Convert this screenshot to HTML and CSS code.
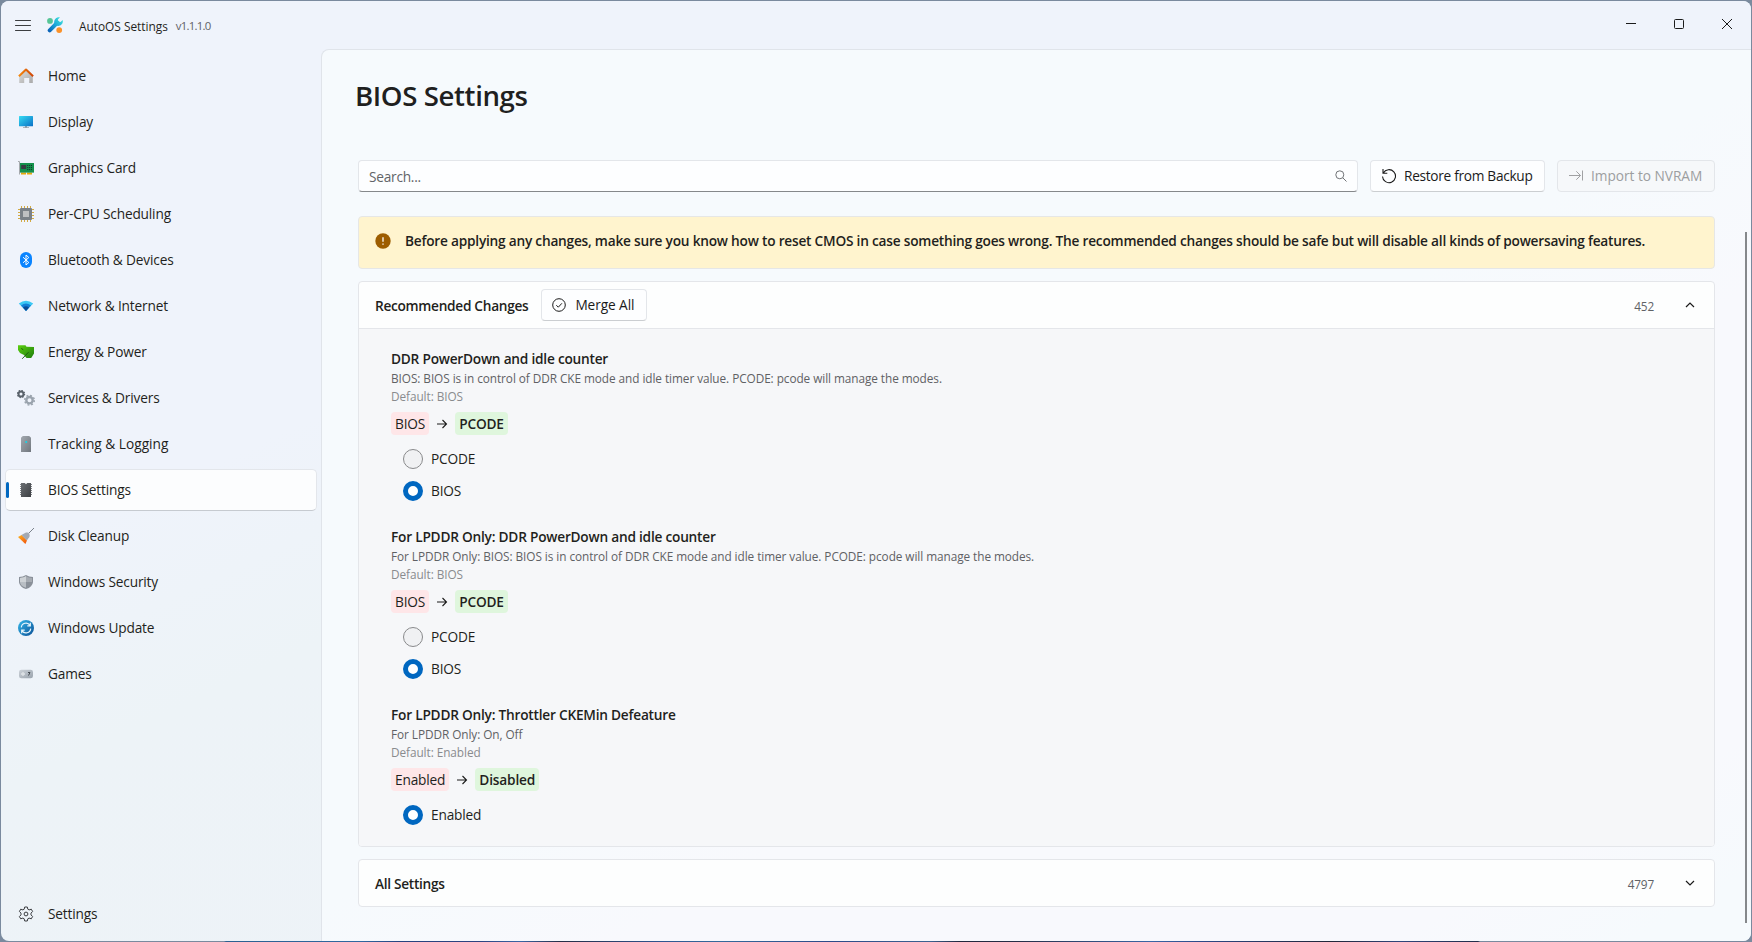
FILE: index.html
```html
<!DOCTYPE html>
<html lang="en">
<head>
<meta charset="utf-8">
<title>AutoOS Settings</title>
<link rel="stylesheet" href="styles.css">
</head>
<body>
<svg class="defs" width="0" height="0" aria-hidden="true">
  <defs>
    <linearGradient id="g-wrench" gradientUnits="userSpaceOnUse" x1="2" y1="14" x2="14" y2="2"><stop offset="0" stop-color="#0a63b8"/><stop offset=".5" stop-color="#1aa3d8"/><stop offset="1" stop-color="#3fdcdc"/></linearGradient>
    <linearGradient id="g-wall" x1="0" y1="0" x2="1" y2="1"><stop offset="0" stop-color="#dedede"/><stop offset="1" stop-color="#a9a9a9"/></linearGradient>
    <linearGradient id="g-roof" x1="0" y1="0" x2="1" y2="0"><stop offset="0" stop-color="#f58a10"/><stop offset="1" stop-color="#cf4508"/></linearGradient>
    <linearGradient id="g-screen" x1="0" y1="0" x2="1" y2="1"><stop offset="0" stop-color="#36dcf3"/><stop offset="1" stop-color="#0a6fc6"/></linearGradient>
    <linearGradient id="g-leaf" x1="0" y1="0" x2="1" y2="1"><stop offset="0" stop-color="#5bd00f"/><stop offset="1" stop-color="#1e7d0d"/></linearGradient>
    <linearGradient id="g-tower" x1="0" y1="0" x2="1" y2="1"><stop offset="0" stop-color="#a3a9b0"/><stop offset="1" stop-color="#70767d"/></linearGradient>
    <linearGradient id="g-bios" x1="0" y1="0" x2="1" y2="1"><stop offset="0" stop-color="#6a6e72"/><stop offset="1" stop-color="#3d4044"/></linearGradient>
    <linearGradient id="g-brush" x1="0" y1="0" x2="1" y2="1"><stop offset="0" stop-color="#fdb520"/><stop offset="1" stop-color="#f0500c"/></linearGradient>
    <linearGradient id="g-update" x1="0" y1="0" x2="1" y2="1"><stop offset="0" stop-color="#35b8ea"/><stop offset="1" stop-color="#0b4f96"/></linearGradient>
    <linearGradient id="g-pad" x1="0" y1="0" x2="1" y2="1"><stop offset="0" stop-color="#ccd2d9"/><stop offset="1" stop-color="#9aa3ad"/></linearGradient>
  </defs>
</svg>
<div class="window">
  <header class="titlebar">
    <svg class="menu" viewBox="0 0 16 12"><path d="M.5 1.5h15M.5 6.500h15M.5 11.500h15" fill="none" stroke="#3b3d40" stroke-linecap="round"/></svg>
    <svg class="logo" viewBox="0 0 16 16">
      <circle cx="3" cy="3.900" r="2.900" fill="#56c596"/>
      <path d="M2.700 13.300 10.500 5.500" stroke="url(#g-wrench)" stroke-width="4" stroke-linecap="round"/>
      <path d="M7.400 6.500C6.500 3 9 -.4 13 .3L10.900 2.600 11.300 4.700 13.500 5.100 15.700 3C16.600 7 13 9.800 9.500 8.600z" fill="url(#g-wrench)"/>
      <circle cx="12.200" cy="13.100" r="2.900" fill="#fb9128"/>
    </svg>
    <span class="app-name">AutoOS Settings</span>
    <span class="version">v1.1.1.0</span>
    <div class="caption">
      <svg viewBox="0 0 12 12"><path d="M1 5.500h10" stroke="#1b1b1b"/></svg>
      <svg viewBox="0 0 12 12"><rect x="1.500" y="1.500" width="9" height="9" rx="1" fill="none" stroke="#1b1b1b"/></svg>
      <svg viewBox="0 0 12 12"><path d="M1 1l10 10M11 1L1 11" stroke="#1b1b1b"/></svg>
    </div>
  </header>
  <nav class="nav">
    <a class="item"><svg viewBox="0 0 16 16"><path d="M1.200 8.200 8 2l6.800 6.200V15h-3.600v-5H6.200v5h-5z" fill="url(#g-wall)"/><path d="M.9 8.200 8 1.600l7.100 6.600" fill="none" stroke="url(#g-roof)" stroke-width="2.100" stroke-linejoin="round"/></svg>Home</a>
    <a class="item"><svg viewBox="0 0 16 16"><path d="M7 12h2v1.200h2v.9H5v-.9h2z" fill="#9aa0a8"/><rect x="1" y="2" width="14" height="10.300" rx=".6" fill="url(#g-screen)"/></svg>Display</a>
    <a class="item"><svg viewBox="0 0 16 16"><path d="M0 1.500h1.500v13" fill="none" stroke="#a5a9ad"/><path d="M3 12.400h5v2H3zM9 12.400h5v2H9z" fill="#e5a80a"/><rect x="2" y="3" width="14" height="9.600" fill="#14904c"/><path d="M3.200 5h5v4h-5z" fill="#383b42"/><path d="M9.200 5.500H14M9.200 7.600H14M9.200 9.600H14" stroke="#12352a" stroke-dasharray="1.100 .8"/></svg>Graphics Card</a>
    <a class="item"><svg viewBox="0 0 16 16"><path d="M3.500 0v16M6.500 0v16M9.500 0v16M12.500 0v16M0 3.500h16M0 6.500h16M0 9.500h16M0 12.500h16" stroke="#cfa22c" stroke-width=".9"/><rect x="2" y="2" width="12" height="12" rx="1" fill="#7b8188"/><rect x="5" y="5" width="6" height="6" fill="#bfc0c2"/></svg>Per-CPU Scheduling</a>
    <a class="item"><svg viewBox="0 0 16 16"><rect x="2" y="0" width="12" height="16" rx="6" fill="#0a84ff"/><path d="M5 5.200l5.800 5.300L8 13V3l2.800 2.500L5 10.800" fill="none" stroke="#fff"/></svg>Bluetooth &amp; Devices</a>
    <a class="item"><svg viewBox="0 0 16 16"><path d="M.8 5.400Q8 .2 15.200 5.400L8 13z" fill="#3bc8f4"/><path d="M3 7.500Q8 3.600 13 7.500L8 13z" fill="#1480d6"/><path d="M5 9.600Q8 7 11 9.600L8 13z" fill="#0b4c96"/></svg>Network &amp; Internet</a>
    <a class="item"><svg viewBox="0 0 16 16"><path d="M0 1.200h7.500l1 1.600L16 3v6.600L13.200 14H8.500L6 11 2 9 0 6z" fill="url(#g-leaf)"/><path d="M4.200 14.800 10.500 8.200M3.300 4.400l2 1.400" stroke="#18550f" stroke-width=".9"/></svg>Energy &amp; Power</a>
    <a class="item"><svg class="gears" viewBox="0 0 18 16"><circle cx="4" cy="4" r="2.500" fill="none" stroke="#5a626b" stroke-width="2"/><circle cx="4" cy="4" r="3.600" fill="none" stroke="#5a626b" stroke-width="1.200" stroke-dasharray="1.400 1.427"/><circle cx="12.500" cy="10.200" r="3.200" fill="none" stroke="#9aa3ad" stroke-width="2.400"/><circle cx="12.500" cy="10.200" r="4.800" fill="none" stroke="#9aa3ad" stroke-width="1.500" stroke-dasharray="1.900 1.870"/></svg>Services &amp; Drivers</a>
    <a class="item wide"><svg viewBox="0 0 16 16"><path d="M3 1.800 4.800 0h6.400L13 1.800V16H3z" fill="url(#g-tower)"/><circle cx="8.200" cy="6" r="1.100" fill="#19d3e6"/></svg>Tracking &amp; Logging</a>
    <a class="item selected"><svg viewBox="0 0 16 16"><path d="M2.500 2v12M13.500 2v12" stroke="#83878b" stroke-dasharray="1 1"/><path d="M3 1h3.800l1.200 1.200L9.200 1H13v14H3z" fill="url(#g-bios)"/></svg>BIOS Settings</a>
    <a class="item"><svg viewBox="0 0 16 16"><path d="M10.500 5.500 16 0" stroke="#7b828b"/><path d="M0 9l3.600-2L9 12.400 7.400 16z" fill="url(#g-brush)"/><path d="M3.400 6.900 8 4.600q2.600-.6 3.300 1.100t.1 3.400L8.800 12.400z" fill="#a3a9b2"/></svg>Disk Cleanup</a>
    <a class="item"><svg viewBox="0 0 16 16"><path d="M8 1q3 2 7 2v5.200Q14.500 13 8 15 1.500 13 1 8.200V3q4 0 7-2z" fill="#8a9099"/><path d="M8 2.200v11.600Q2.300 12 2 8V4q3.500 0 6-1.800z" fill="#b9bec4"/><path d="M8 2.200Q10.500 4 14 4v4H8z" fill="#a6abb2"/><path d="M2 4q3.500 0 6-1.800V8H2z" fill="#ced2d6"/></svg>Windows Security</a>
    <a class="item"><svg viewBox="0 0 16 16"><circle cx="8" cy="8" r="8" fill="url(#g-update)"/><path d="M3.300 7.400A4.700 4.700 0 0 1 12 5.400M12.300 2.800v3h-3M12.700 8.600A4.700 4.700 0 0 1 4 10.600M3.700 13.200v-3h3" fill="none" stroke="#e8f5fc" stroke-width="1.200"/></svg>Windows Update</a>
    <a class="item"><svg viewBox="0 0 16 16"><rect x="1" y="3.700" width="14" height="8.600" rx="2.400" fill="url(#g-pad)"/><path d="M3 8h4M5 6v4" stroke="#dfe3e7" stroke-width="1.300"/><path d="M10 6.500h2L10.500 9.500" fill="none" stroke="#454b52"/></svg>Games</a>
    <a class="item footer"><svg viewBox="0 0 16 16"><path d="M6.700 1h2.600l.5 2.200 1.300.7 2.200-.7 1.300 2.300-1.600 1.600v1.800l1.600 1.600-1.300 2.300-2.200-.7-1.300.7-.5 2.200H6.700l-.5-2.200-1.300-.7-2.200.7-1.300-2.300L3 8.900V7.100L1.400 5.500l1.300-2.300 2.200.7 1.300-.7z" fill="none" stroke="#3b3d40" stroke-linejoin="round"/><circle cx="8" cy="8" r="1.900" fill="none" stroke="#3b3d40"/></svg>Settings</a>
  </nav>
  <main class="page">
    <h1>BIOS Settings</h1>
    <div class="toolbar">
      <div class="search"><span>Search...</span><svg viewBox="0 0 12 12"><circle cx="4.800" cy="4.800" r="4" fill="none" stroke="#707376"/><path d="M7.800 7.800 11.500 11.500" stroke="#707376"/></svg></div>
      <button class="btn restore"><svg viewBox="0 0 16 16"><path d="M2.300 5A6.500 6.500 0 1 1 1.500 8.500M2 1v4.300h4.300" fill="none" stroke="#1b1b1b" stroke-width="1.100"/></svg>Restore from Backup</button>
      <button class="btn import" disabled><svg viewBox="0 0 16 16"><path d="M1 7.500h11.500M8.300 3.300l4.200 4.200-4.200 4.200M14.500 2.500v10" fill="none" stroke="#a0a1a3"/></svg>Import to NVRAM</button>
    </div>
    <div class="infobar">
      <svg viewBox="0 0 16 16"><circle cx="8" cy="8" r="7.700" fill="#9d5d00"/><path d="M8 4.200v4.600M8 10.400v1.400" stroke="#fff" stroke-width="1.300"/></svg>
      <span>Before applying any changes, make sure you know how to reset CMOS in case something goes wrong. The recommended changes should be safe but will disable all kinds of powersaving features.</span>
    </div>
    <section class="expander">
      <div class="head">
        <h2>Recommended Changes</h2>
        <button class="btn merge"><svg viewBox="0 0 16 16"><circle cx="8" cy="8" r="6.300" fill="none" stroke="#1b1b1b"/><path d="M5.300 8.200l2 2 3.600-3.900" fill="none" stroke="#1b1b1b"/></svg>Merge All</button>
        <span class="count">452</span>
        <svg class="chev" viewBox="0 0 10 6"><path d="M1 5l4-4 4 4" fill="none" stroke="#1b1b1b" stroke-width="1.200"/></svg>
      </div>
      <div class="body">
        <article>
          <h3>DDR PowerDown and idle counter</h3>
          <p class="desc">BIOS: BIOS is in control of DDR CKE mode and idle timer value. PCODE: pcode will manage the modes.</p>
          <p class="default">Default: BIOS</p>
          <div class="change"><span class="old">BIOS</span><svg viewBox="0 0 12 12"><path d="M1 6h9.500M6.500 2l4 4-4 4" fill="none" stroke="#1b1b1b" stroke-width="1.100"/></svg><b class="new">PCODE</b></div>
          <label><i></i>PCODE</label>
          <label><i class="on"></i>BIOS</label>
        </article>
        <article>
          <h3>For LPDDR Only: DDR PowerDown and idle counter</h3>
          <p class="desc">For LPDDR Only: BIOS: BIOS is in control of DDR CKE mode and idle timer value. PCODE: pcode will manage the modes.</p>
          <p class="default">Default: BIOS</p>
          <div class="change"><span class="old">BIOS</span><svg viewBox="0 0 12 12"><path d="M1 6h9.500M6.500 2l4 4-4 4" fill="none" stroke="#1b1b1b" stroke-width="1.100"/></svg><b class="new">PCODE</b></div>
          <label><i></i>PCODE</label>
          <label><i class="on"></i>BIOS</label>
        </article>
        <article>
          <h3>For LPDDR Only: Throttler CKEMin Defeature</h3>
          <p class="desc">For LPDDR Only: On, Off</p>
          <p class="default">Default: Enabled</p>
          <div class="change"><span class="old">Enabled</span><svg viewBox="0 0 12 12"><path d="M1 6h9.500M6.500 2l4 4-4 4" fill="none" stroke="#1b1b1b" stroke-width="1.100"/></svg><b class="new">Disabled</b></div>
          <label><i class="on"></i>Enabled</label>
        </article>
      </div>
    </section>
    <section class="expander">
      <div class="head">
        <h2>All Settings</h2>
        <span class="count">4797</span>
        <svg class="chev" viewBox="0 0 10 6"><path d="M1 1l4 4 4-4" fill="none" stroke="#1b1b1b" stroke-width="1.200"/></svg>
      </div>
    </section>
    <div class="scrollbar"></div>
  </main>
</div>
</body>
</html>
```
FILE: styles.css
```css
* { box-sizing: border-box; }

body {
  margin: 0;
  height: 942px;
  padding: 1px;
  overflow: hidden;
  font: 13.7px/20px "Open Sans", "Noto Sans", sans-serif;
  letter-spacing: -0.17px;
  color: #1f1f20;
  background: linear-gradient(90deg, #7a8a9e 0 224px, #2b6090 226px, #3068a0 360px, #27437f 400px, #2d4380 480px, #3a66a5 520px, #262d45 560px, #2f5590 660px, #356a9b 720px, #2d4a88 830px, #3c6290 930px, #22263c 960px, #272f48 1020px, #3a66a5 1150px, #2d4a88 1200px, #222638 1330px, #30467c 1400px, #222c48 1478px, #7a8a9e 1480px) bottom / 100% 1px no-repeat, #7a8a9e;
}

h1, h2, h3, p { margin: 0; }
svg { display: block; flex: none; }
.defs { position: absolute; }

.window {
  display: grid;
  grid-template: 48px 1fr / 320px 1fr;
  width: 1750px;
  height: 940px;
  border-radius: 8px;
  overflow: hidden;
  background: linear-gradient(155deg, #eff3fb 0 32%, #edf3f7 45%, #eef2f8 100%);
}

.titlebar {
  grid-column: 1 / 3;
  display: flex;
  align-items: center;
  padding-left: 14px;
  background: #eff3fb;
}
.menu { width: 16px; height: 12px; }
.logo { width: 16px; height: 16px; margin: 0 16px; }
.app-name { margin-top: 2px; font-size: 11.9px; letter-spacing: -0.02px; }
.version { margin: 2px 0 0 8px; font-size: 11.4px; letter-spacing: -0.75px; color: #606266; }
.caption { display: flex; gap: 36px; margin: -2px 18px 0 auto; }
.caption svg { width: 12px; height: 12px; }

.nav {
  display: flex;
  flex-direction: column;
  gap: 4px;
  padding: 6px 4px 6px 4px;
}
.item {
  display: flex;
  align-items: center;
  height: 42px;
  padding-left: 12px;
  border: 1px solid transparent;
  border-radius: 5px;
}
.item svg { width: 16px; height: 16px; margin-right: 14px; }
.item .gears { width: 18px; margin: 0 13px 0 -1px; }
.wide { letter-spacing: 0; }
.selected {
  position: relative;
  border-color: #e3e6eb;
  border-bottom-color: #c6cad0;
  background: #fcfdfe;
}
.selected::before {
  content: "";
  position: absolute;
  left: 0;
  top: 12px;
  width: 3px;
  height: 16px;
  border-radius: 2px;
  background: #0067c0;
}
.footer { margin-top: auto; }

.page {
  position: relative;
  padding: 26px 36px 0 36px;
  border: solid #e0e4ea;
  border-width: 1px 0 0 1px;
  border-top-left-radius: 8px;
  background: linear-gradient(150deg, #f6fafd 0 50%, #f8f9fd 62% 88%, #f6fafd 96%);
}
h1 {
  margin-left: -3px;
  font-size: 27.6px;
  line-height: 38px;
  font-weight: 600;
  letter-spacing: -0.38px;
}

.toolbar { display: flex; margin-top: 46px; }
.search {
  display: flex;
  flex: 1;
  align-items: center;
  justify-content: space-between;
  height: 32px;
  padding: 0 10px;
  border: 1px solid #e3e6ea;
  border-bottom-color: #85888b;
  border-radius: 4px;
  background: #fdfeff;
  color: #626467;
}
.search span { margin-top: 1px; letter-spacing: -0.25px; }
.search svg { width: 12px; height: 12px; }
.btn {
  display: flex;
  align-items: center;
  height: 32px;
  padding: 0 0 0 10px;
  border: 1px solid #e3e6ea;
  border-bottom-color: #cbced1;
  border-radius: 4px;
  background: #fdfeff;
  font: inherit;
  letter-spacing: -0.3px;
  color: #1b1b1b;
  white-space: nowrap;
}
.btn svg { width: 16px; height: 16px; margin-right: 7px; }
.restore { width: 175px; margin-left: 12px; }
.import {
  width: 158px;
  margin-left: 12px;
  border-color: #e3e6ea;
  background: #f6f8fa;
  color: #9c9ea0;
  letter-spacing: -0.03px;
}

.infobar {
  display: flex;
  align-items: center;
  height: 53px;
  margin-top: 24px;
  padding: 0 15px 3px 16px;
  border: 1px solid #e6e7e6;
  border-radius: 4px;
  background: #fff4ce;
  font-weight: 600;
  letter-spacing: -0.225px;
  white-space: nowrap;
}
.infobar svg { width: 16px; height: 16px; margin-right: 14px; }

.expander {
  margin-top: 12px;
  border: 1px solid #e4e6ea;
  border-radius: 4px;
  overflow: hidden;
  background: #fdfefe;
}
.head { display: flex; align-items: center; height: 46px; padding: 0 19px 0 16px; }
h2 { padding-top: 2px; font-size: inherit; line-height: 20px; font-weight: 600; letter-spacing: -0.3px; }
.merge { width: 106px; margin-left: 13px; padding-left: 9px; letter-spacing: -0.1px; }
.merge svg { margin-right: 8px; }
.count { margin-left: auto; padding-top: 2px; font-size: 11.8px; color: #606266; }
.chev { width: 10px; height: 6px; margin-left: 31px; }
.body {
  padding: 20px 32px 15px;
  border-top: 1px solid #e4e6ea;
  background: #f6f7f9;
}

article + article { margin-top: 20px; }
h3 { font-size: inherit; line-height: 20px; font-weight: 600; letter-spacing: -0.23px; }
.desc, .default { margin-top: 1px; font-size: 11.8px; line-height: 16px; letter-spacing: -0.065px; color: #5f6164; }
.default { margin-top: 2px; color: #898b8e; }
.change { display: flex; align-items: center; height: 23px; margin: 8px 0 8px; line-height: 23px; }
.change svg { width: 12px; height: 12px; margin: 0 7px; }
.old, .new { padding: 0 4px; border-radius: 4px; }
.old { background: #fee6e8; }
.new { background: #dff6dd; font-weight: 600; }

label { display: flex; align-items: center; height: 32px; padding-left: 12px; }
label i {
  width: 20px;
  height: 20px;
  margin-right: 8px;
  border: 1px solid #898a8c;
  border-radius: 50%;
  background: #f0f1f3;
}
label .on { border: 5px solid #0067c0; background: #fff; }

.scrollbar {
  position: absolute;
  right: 4px;
  top: 182px;
  width: 2px;
  height: 691px;
  background: #85888b;
}
```
